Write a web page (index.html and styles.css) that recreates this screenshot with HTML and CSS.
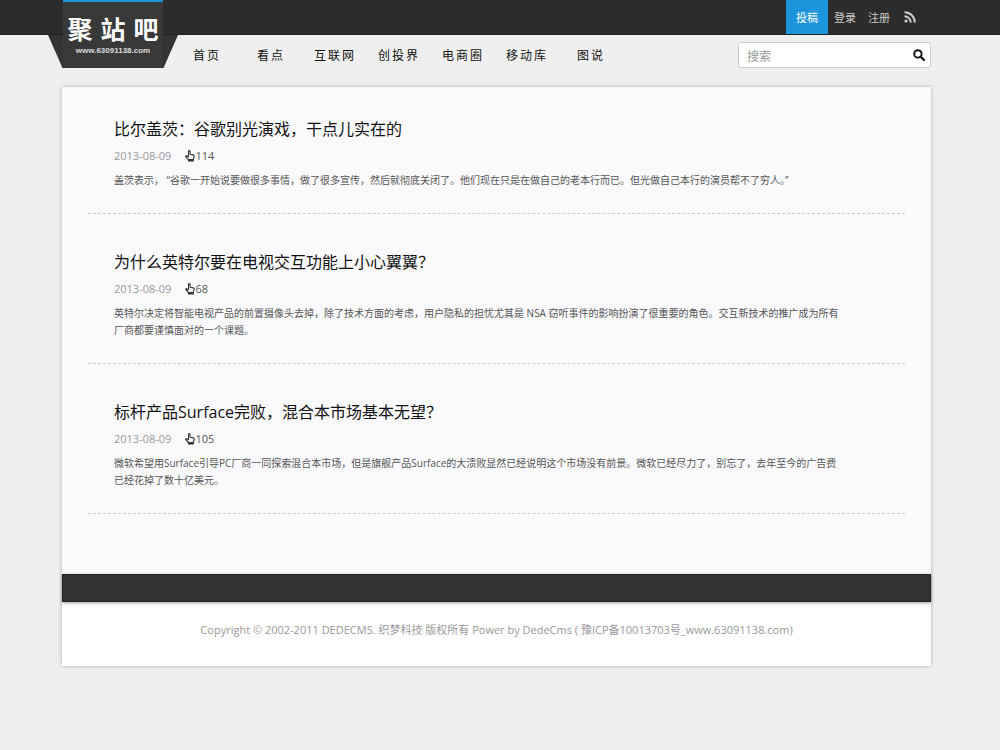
FILE: index.html
```html
<!DOCTYPE html>
<html lang="zh-CN">
<head>
<meta charset="utf-8">
<meta name="viewport" content="width=device-width, initial-scale=1">
<title>聚站吧</title>
<link rel="stylesheet" href="styles.css">
</head>
<body>
<header class="header">
  <div class="topbar">
    <nav class="account" aria-label="账户">
      <a class="account-link account-primary" href="#">投稿</a>
      <a class="account-link" href="#">登录</a>
      <a class="account-link" href="#">注册</a>
      <a class="account-link rss" href="#" aria-label="RSS">
        <svg width="12" height="12" viewBox="0 0 12 12" fill="none" stroke="#ccc" stroke-width="2">
          <circle cx="2" cy="10" r="1.6" fill="#ccc" stroke="none"/>
          <path d="M0.5 5.2A6.2 6.2 0 0 1 6.7 11.6M0.5 1.2A10.2 10.2 0 0 1 10.8 11.6"/>
        </svg>
      </a>
    </nav>
  </div>
  <a class="logo" href="#">
    <svg class="logo-shape" width="130" height="68" viewBox="0 0 130 68" aria-hidden="true">
      <path d="M0 35H130L115.500 68H14.500Z" fill="#333"/>
      <path d="M15 0H115V67H15Z" fill="#393939"/>
      <path d="M15 0H115V2H15Z" fill="#1d95dc"/>
    </svg>
    <span class="logo-name"><span>聚</span><span>站</span><span>吧</span></span>
    <span class="logo-url">www.63091138.com</span>
  </a>
  <div class="menubar">
    <nav class="menu" aria-label="栏目">
      <a href="#">首页</a>
      <a href="#">看点</a>
      <a href="#">互联网</a>
      <a href="#">创投界</a>
      <a href="#">电商圈</a>
      <a href="#">移动库</a>
      <a href="#">图说</a>
    </nav>
    <form class="search" role="search">
      <input class="search-input" type="search" placeholder="搜索" aria-label="搜索">
      <button class="search-button" type="button" aria-label="提交搜索">
        <svg width="12" height="12" viewBox="0 0 12 12" fill="none" stroke="#111">
          <circle cx="4.900" cy="4.900" r="3.700" stroke-width="1.900"/>
          <path d="M7.700 7.700L11 11" stroke-width="2.300" stroke-linecap="round"/>
        </svg>
      </button>
    </form>
  </div>
</header>

<svg class="symbols" aria-hidden="true">
  <symbol id="hand" viewBox="0 0 10 12">
    <path d="M3.500 7V1.500Q3.500.6 4.300.6T5.100 1.500V4.200L8.300 4.900Q9.300 5.200 9.200 6.200L8.300 9.500H3.500L.7 6.500Q.6 5.500 1.600 5.600L3.500 7" fill="none" stroke="#333" stroke-width="1.100" stroke-linejoin="round"/>
    <path d="M3 9.200H8.800V11.500H3Z" fill="#333"/>
  </symbol>
</svg>

<div class="page">
  <main class="articles">
    <article class="article">
      <h2 class="title"><a href="#">比尔盖茨：谷歌别光演戏，干点儿实在的</a></h2>
      <div class="meta">
        <time datetime="2013-08-09">2013-08-09</time>
        <span class="views"><svg width="10" height="12"><use href="#hand"/></svg>114</span>
      </div>
      <p class="summary">盖茨表示， “谷歌一开始说要做很多事情，做了很多宣传，然后就彻底关闭了。他们现在只是在做自己的老本行而已。但光做自己本行的演员帮不了穷人。”</p>
    </article>
    <article class="article">
      <h2 class="title"><a href="#">为什么英特尔要在电视交互功能上小心翼翼？</a></h2>
      <div class="meta">
        <time datetime="2013-08-09">2013-08-09</time>
        <span class="views"><svg width="10" height="12"><use href="#hand"/></svg>68</span>
      </div>
      <p class="summary">英特尔决定将智能电视产品的前置摄像头去掉，除了技术方面的考虑，用户隐私的担忧尤其是 NSA 窃听事件的影响扮演了很重要的角色。交互新技术的推广成为所有厂商都要谨慎面对的一个课题。</p>
    </article>
    <article class="article">
      <h2 class="title"><a href="#">标杆产品Surface完败，混合本市场基本无望？</a></h2>
      <div class="meta">
        <time datetime="2013-08-09">2013-08-09</time>
        <span class="views"><svg width="10" height="12"><use href="#hand"/></svg>105</span>
      </div>
      <p class="summary">微软希望用Surface引导PC厂商一同探索混合本市场，但是旗舰产品Surface的大溃败显然已经说明这个市场没有前景。微软已经尽力了，别忘了，去年至今的广告费已经花掉了数十亿美元。</p>
    </article>
  </main>
  <div class="band"></div>
  <footer class="footer">Copyright © 2002-2011 DEDECMS. 织梦科技 版权所有 Power by DedeCms ( 豫ICP备10013703号_www.63091138.com)</footer>
</div>
</body>
</html>
```
FILE: styles.css
```css
* {
  box-sizing: border-box;
}

body {
  margin: 0;
  background: #efefef;
  color: #555;
  font-family: "Open Sans", "Noto Sans CJK SC", sans-serif;
  font-size: 10px;
}

a {
  color: inherit;
  text-decoration: none;
}

.symbols {
  display: none;
}

.header {
  position: relative;
}

.topbar {
  height: 35px;
  padding: 0 69px 0 62px;
  background: #2c2c2c;
  border-bottom: 1px solid #222;
}

.account {
  display: flex;
  justify-content: flex-end;
  height: 34px;
  padding-right: 9px;
}

.account-link {
  display: flex;
  align-items: center;
  padding: 0 6px;
  color: #ccc;
  font-size: 11px;
}

.account-primary {
  padding: 0 10px;
  background: #1d95dc;
  color: #fff;
}

.rss {
  padding-left: 8px;
}

.logo {
  position: absolute;
  top: 0;
  left: 48px;
  display: flex;
  flex-direction: column;
  align-items: center;
  width: 130px;
  height: 68px;
  padding-top: 13px;
  color: #fff;
}

.logo-shape {
  position: absolute;
  top: 0;
  left: 0;
}

.logo-name {
  position: relative;
  display: flex;
  gap: 8px;
  font: 700 25px/30px "Noto Sans CJK SC", sans-serif;
}

.logo-url {
  position: relative;
  padding-top: 2px;
  color: #ddd;
  font: 700 8px/12px "Liberation Sans", sans-serif;
}

.menubar {
  display: flex;
  justify-content: space-between;
  align-items: center;
  padding: 7px 69px 0 175px;
}

.menu {
  display: flex;
}

.menu a {
  width: 64px;
  color: #111;
  font-size: 12px;
  letter-spacing: 2px;
  text-align: center;
}

.search {
  display: flex;
  align-items: center;
  width: 193px;
  height: 26px;
  background: #fff;
  border: 1px solid #ccc;
  border-radius: 3px;
}

.search-input {
  flex: 1;
  min-width: 0;
  height: 24px;
  padding: 0 8px;
  background: none;
  border: 0;
  font: 12px "Noto Sans CJK SC", sans-serif;
}

.search-input::placeholder {
  color: #999;
}

.search-button {
  display: flex;
  padding: 5px;
  background: none;
  border: 0;
}

.page {
  margin: 19px 69px 84px 62px;
  background: #fff;
  box-shadow: 0 0 4px rgba(0, 0, 0, 0.25);
}

.articles {
  display: flex;
  flex-direction: column;
  gap: 36px;
  padding: 30px 26px 60px;
  background: #fafafc;
}

.article {
  padding: 0 26px 24px;
  border-bottom: 1px dashed #ccc;
}

.title {
  margin: 0;
  color: #111;
  font-size: 16px;
  font-weight: 400;
  line-height: 24px;
}

.meta {
  display: flex;
  gap: 14px;
  margin: 7px 0 8px;
  color: #999;
  font-size: 11px;
  line-height: 16px;
}

.views {
  display: flex;
  align-items: center;
  color: #555;
}

.summary {
  max-width: 735px;
  margin: 0;
  padding-right: 8px;
  line-height: 17px;
}

.band {
  height: 28px;
  background: #333;
  border: 1px solid #222;
  box-shadow: 0 1px 3px rgba(0, 0, 0, 0.4);
}

.footer {
  padding: 19px 0 28px;
  color: #999;
  font-size: 11px;
  line-height: 17px;
  text-align: center;
}
```
